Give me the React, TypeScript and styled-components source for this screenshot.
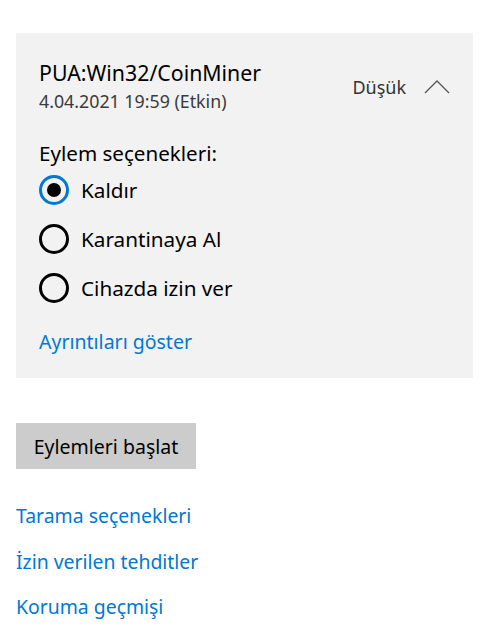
import React, { useState } from "react";
import styled, { createGlobalStyle } from "styled-components";

const Global = createGlobalStyle`
  html, body { margin: 0; padding: 0; background: #ffffff; }
  body { font-family: "Noto Sans", "Open Sans", sans-serif; color: #000; }
`;

const Page = styled.div`
  display: flex;
  flex-direction: column;
  padding: 33px 28px 0 16px;
`;

const Panel = styled.section`
  background: #f2f2f2;
  height: 345px;
  box-sizing: border-box;
  padding: 27px 23px 0 23px;
  display: flex;
  flex-direction: column;
`;

const Header = styled.div`
  display: flex;
  align-items: center;
  justify-content: space-between;
`;

const TitleBlock = styled.div`
  display: flex;
  flex-direction: column;
`;

const Title = styled.div`
  font-size: 21.3px;
  line-height: 26px;
  color: #000;
`;

const Subtitle = styled.div`
  font-size: 17.8px;
  line-height: 24px;
  margin-top: 3px;
  color: #3b3b3b;
`;

const Severity = styled.div`
  display: flex;
  align-items: center;
  gap: 18px;
  font-size: 18px;
  color: #333;
`;

const Chevron = styled.svg`
  width: 26px;
  height: 14px;
  display: block;
`;

const SectionLabel = styled.div`
  font-size: 20.6px;
  line-height: 26px;
  margin-top: 27px;
`;

const RadioList = styled.div`
  display: flex;
  flex-direction: column;
  gap: 19px;
  margin-top: 9px;
`;

const RadioRow = styled.label`
  display: flex;
  align-items: center;
  gap: 12px;
  font-size: 20.7px;
  line-height: 30px;
  cursor: pointer;
`;

const RadioCircle = styled.span<{ $on: boolean }>`
  width: 30px;
  height: 30px;
  box-sizing: border-box;
  border-radius: 50%;
  border: 3px solid ${(p) => (p.$on ? "#0078d7" : "#000")};
  display: flex;
  align-items: center;
  justify-content: center;
  flex: none;
  &::after {
    content: "";
    width: 14px;
    height: 14px;
    border-radius: 50%;
    background: #000;
    display: ${(p) => (p.$on ? "block" : "none")};
  }
`;

const Link = styled.a`
  color: #0078d7;
  font-size: 19.4px;
  line-height: 26px;
  text-decoration: none;
  cursor: pointer;
`;

const DetailsLink = styled(Link)`
  margin-top: 26px;
  align-self: flex-start;
  font-size: 19.5px;
`;

const ActionButton = styled.button`
  margin-top: 45px;
  align-self: flex-start;
  width: 180px;
  height: 46px;
  border: none;
  background: #cccccc;
  font-family: inherit;
  font-size: 19.5px;
  color: #000;
  padding: 0;
`;

const LinkList = styled.nav`
  display: flex;
  flex-direction: column;
  gap: 19.5px;
  margin-top: 34px;
`;

const options = ["Kaldır", "Karantinaya Al", "Cihazda izin ver"];

export default function App() {
  const [sel, setSel] = useState(0);
  return (
    <>
      <Global />
      <Page>
        <Panel>
          <Header>
            <TitleBlock>
              <Title>PUA:Win32/CoinMiner</Title>
              <Subtitle>4.04.2021 19:59 (Etkin)</Subtitle>
            </TitleBlock>
            <Severity>
              Düşük
              <Chevron viewBox="0 0 26 14">
                <polyline points="1,13 13,1 25,13" fill="none" stroke="#555" strokeWidth="1.3" />
              </Chevron>
            </Severity>
          </Header>
          <SectionLabel>Eylem seçenekleri:</SectionLabel>
          <RadioList>
            {options.map((o, i) => (
              <RadioRow key={o} onClick={() => setSel(i)}>
                <RadioCircle $on={sel === i} />
                {o}
              </RadioRow>
            ))}
          </RadioList>
          <DetailsLink>Ayrıntıları göster</DetailsLink>
        </Panel>
        <ActionButton>Eylemleri başlat</ActionButton>
        <LinkList>
          <Link>Tarama seçenekleri</Link>
          <Link>İzin verilen tehditler</Link>
          <Link>Koruma geçmişi</Link>
        </LinkList>
      </Page>
    </>
  );
}
